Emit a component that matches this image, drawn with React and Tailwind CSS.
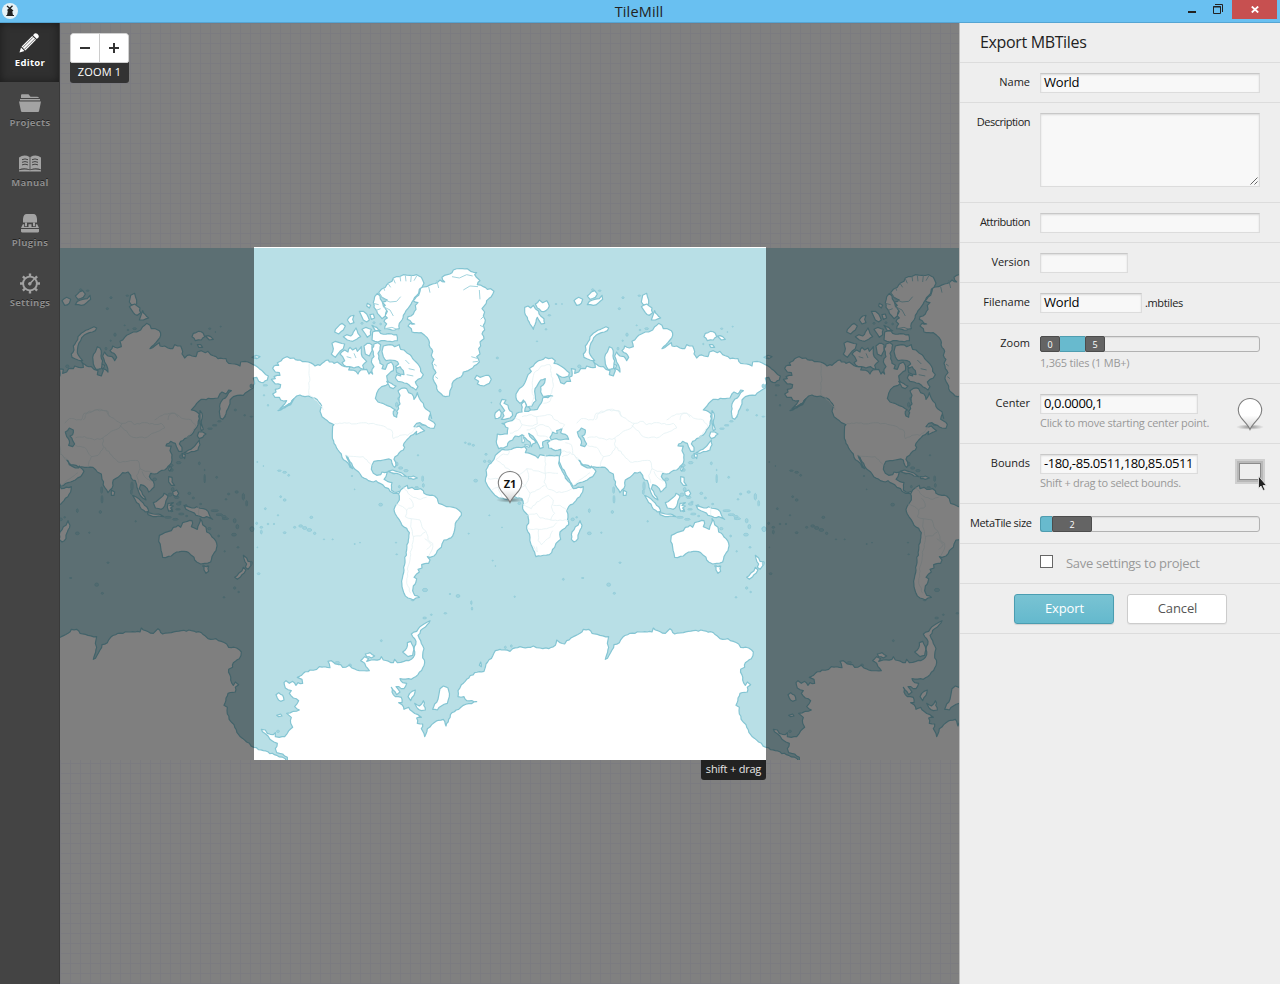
import React from "react";

// Coastlines are traced on a tripled grid; each part is [offsetX, offsetY, points].
const A = [0, 0], B = [750, 0], C = [0, 510], D = [750, 510], E = [0, 1080], F = [750, 1080];

// Repeatable noise in -1..1 that roughens the long straight runs of a coast.
function noise(a, b) {
  const v = Math.sin(a * 12.9898 + b * 78.233) * 43758.5453;
  return (v - Math.floor(v)) * 2 - 1;
}

function outline(...parts) {
  const pts = [];
  for (const [[ox, oy], s] of parts) {
    for (const p of s.trim().split(/\s+/)) {
      const [x, y] = p.split(",").map(Number);
      pts.push([x + ox, y + oy]);
    }
  }
  const out = [];
  pts.forEach(([x, y], i) => {
    out.push(`${x},${y}`);
    const next = pts[i + 1];
    if (!next) return;
    const dx = next[0] - x, dy = next[1] - y;
    const len = Math.hypot(dx, dy);
    const n = Math.floor(len / 7);
    for (let k = 1; k < n; k++) {
      const t = k / n;
      const off = noise(x + k * 3, y) * 2.2;
      out.push(`${(x + dx * t - (dy / len) * off).toFixed(1)},${(y + dy * t + (dx / len) * off).toFixed(1)}`);
    }
  });
  return "M" + out.join("L");
}

const LAND = [
  // North America
  outline(
    [A, "64,418 76,416 72,410 90,406 88,398 76,396 68,385 72,378 86,376 82,368 94,362 98,356 112,350 120,355 132,354 136,359 150,360 158,365 175,366 195,378 204,374 210,376 222,366 235,360 238,366 248,366 252,370 262,366 270,372 285,380 300,380 296,390 318,394 324,402 332,390 350,388 357,402 362,396 368,402 366,388 372,380 364,366 366,356 372,350 370,336 366,326 372,312 384,308 392,314 390,330 384,340 386,356 390,370 400,376 396,386 406,388 412,372 424,366 430,376 430,392 418,400 410,408 412,420 418,430 408,436 395,440 386,448 380,460 376,475 384,486 398,490 412,497 430,506 436,510"],
    [C, "430,4 432,18 440,22 443,8"],
    [A, "440,514 446,506 444,498 450,492 447,476 450,466 444,452 455,445 470,446 476,458 486,462 492,478 498,470 502,458 508,475 520,490 522,500 540,515 545,535"],
    [C, "541,12 536,28 546,34 556,44 552,55 540,54 526,46 510,38 500,40 492,50 508,48 518,58 524,62 510,68 498,74 500,64 490,74 478,82 470,90 462,100 460,106 464,112 460,120 448,128 435,140 432,148 438,166 434,172 426,160 424,150 410,148 400,150 384,152 372,154 366,165 364,178 370,190 380,196 392,194 396,186 412,186 408,200 402,208 412,214 426,218 424,240 432,246 448,244 450,252 440,250 430,250 420,244 416,236 405,232 390,220 378,212 370,216 355,212 335,200 326,186 315,178 305,160 294,142 288,136 296,154 308,176 300,172 288,154 276,142 274,132 264,120 252,100 247,78 248,48 252,44 238,38 226,28 216,20 210,4"],
    [A, "215,498 206,486 194,474 176,468 165,470 150,465 140,468 132,476 124,488 104,500 90,506 104,492 110,482 92,480 88,472 75,472 68,462 78,456 76,448 90,444 92,434 76,432"]
  ),
  // Alaska Peninsula and the Aleutians
  outline([A, "132,476 122,490 104,502 84,512 104,504 122,494"]),
  // South America
  outline([C, "446,252 452,240 462,232 472,226 474,236 486,232 494,238 512,236 520,242 522,250 530,254 540,256 554,258 562,266 566,280 578,284 590,290 610,292 626,300 634,308 634,316 625,328 616,340 614,360 608,378 596,386 582,390 576,402 574,412 562,422 552,438 540,442 532,440 540,450 536,460 515,464 516,474 504,478 508,486 500,492 492,502 500,506 498,516 490,528 488,542 494,556 508,562 498,564 490,570 474,564 462,550 456,530 457,505 462,480 465,450 470,420 475,390 478,368 470,355 456,346 447,328 436,312 432,298 440,282 448,270 448,258"]),
  // Greenland
  outline([A, "510,154 512,142 530,140 548,132 562,128 570,120 584,126 576,112 592,104 606,98 610,90 630,86 652,86 662,94 680,98 674,104 690,122 682,134 700,140 712,148 722,146 732,154 724,170 710,182 704,196 696,206 704,216 700,228 706,240 700,256 704,270 696,282 702,296 690,306 692,318 686,326 690,342 680,350 688,366 680,374 668,384 640,396 634,410 620,416 610,424 606,440 600,452 598,468 586,470 574,462 564,454 560,438 552,424 550,408 558,398 550,386 546,370 552,358 544,346 548,334 540,322 536,300 524,286 514,278 500,278 486,276 484,266 474,258 480,250 494,252 472,238 474,230 490,222 498,208 496,196 504,188 490,182 506,166"]),
  // Ellesmere
  outline([A, "386,158 394,148 406,142 414,130 426,124 430,114 448,110 460,104 480,106 500,104 514,112 522,130 516,142 508,148 506,160 494,172 486,186 478,200 468,212 460,226 456,240 448,250 448,266 434,270 420,268 404,266 410,252 402,244 412,234 404,226 412,214 396,204 406,196 396,186 412,180 396,172"]),
  outline([A, "382,160 374,170 370,188 372,202 380,212 388,226 396,236 406,228 410,212 400,198 396,184 390,168"]),
  outline([A, "368,276 386,272 392,280 440,284 442,302 420,304 404,302 384,306 366,300"]),
  outline([A, "400,318 420,314 434,320 448,314 452,328 462,330 470,338 480,344 488,356 498,366 508,378 512,394 520,404 514,414 504,418 496,426 504,440 498,450 482,440 470,430 456,426 444,424 436,414 440,404 452,408 448,390 436,380 446,372 436,362 420,360 408,362 400,350 396,334"]),
  // Western archipelago
  outline([A, "246,310 256,304 268,308 284,312 280,326 270,334 262,344 256,352 244,342 250,326"]),
  outline([A, "270,342 284,330 294,336 300,322 308,330 318,324 322,334 334,320 334,342 342,356 350,364 338,376 342,388 326,380 312,384 298,380 282,376 276,368 284,362 278,350"]),
  outline([A, "254,276 262,262 276,250 286,258 280,270 266,282"]),
  outline([A, "280,290 290,284 302,288 310,276 318,264 324,280 332,290 320,298 308,304 292,300"]),
  outline([A, "292,240 302,228 312,226 308,238 312,248 300,252"]),
  outline([A, "328,214 340,214 350,222 358,240 350,246 340,240"]),
  outline([A, "342,318 352,310 366,314 366,332 358,348 346,342"]),
  outline([A, "336,268 348,262 364,268 362,284 352,292 346,282"]),
  outline([A, "366,256 380,262 392,272 376,272"]),
  outline([A, "360,224 370,222 374,234 364,238"]),
  outline([A, "352,190 362,196 358,204 350,198"]),
  outline([A, "410,424 424,430 438,438 430,446 420,442"]),
  // Iceland
  outline([A, "674,416 680,406 690,412 702,408 716,406 724,418 718,430 702,438 690,436 682,432 686,424"]),
  // Great Britain and Ireland
  outline([D, "6,-10 0,-18 6,-32 18,-30 12,-20 24,-14 26,-4 36,6 38,16 30,24 14,28 4,28 12,18 8,8 14,2"]),
  outline([D, "-14,8 -2,-2 4,8 2,20 -14,26 -16,16"]),
  // Eurasia
  outline(
    [B, "50,480 48,462 54,452 70,436 78,420 84,404 94,394 88,386 100,378 110,366 124,360 136,352 146,356 156,354 166,362 162,370 176,374 186,380 200,392 208,398 206,408 194,412 178,408 170,402 178,416 182,428 192,432 200,424 212,424 208,412 216,408 214,386 226,388 224,400 236,396 242,386 256,386 260,378 272,382 286,382 280,364 296,378 310,380 318,388 330,392 328,404 340,408 346,392 340,372 350,376 346,386 360,396 356,376 350,366 344,348 350,336 360,348 372,350 380,362 386,352 378,340 366,332 374,318 388,324 400,320 396,304 410,292 424,282 436,276 446,276 458,270 464,260 476,250 486,256 490,266 502,266 514,272 518,286 510,300 498,314 486,326 500,318 514,308 516,318 530,318 540,324 554,326 560,314 578,318 582,328 582,342 590,354 598,346 612,348 624,350 628,336 640,332 652,338 660,334 668,344 684,350 690,356 714,356 722,370 740,372 756,378 758,366 780,366 796,374 814,386 826,396 841,408 838,420 826,428 812,424 806,412 796,414 800,430 796,444 780,454 766,466 748,466 736,470 726,480 726,492 720,506 714,522 704,538 697,534 694,514 696,492 704,478 718,466 730,452 722,450 714,462 702,456 690,474 668,476 640,478 626,490 610,510 624,514 634,522"],
    [D, "634,26 630,44 616,68 602,78 590,86 578,94 574,102 582,112 582,124 572,124 566,112 562,100 548,94 536,102 534,108 550,108 546,122 552,134 552,150 545,165 530,180 514,185 500,192 488,190 484,200 496,214 498,232 482,246 478,236 466,226 458,224 454,236 464,254 474,270 464,264 452,246 446,224 442,212 434,210 428,196 420,186 404,188 390,202 376,210 372,235 360,248 350,232 342,208 340,192 328,186 315,172 290,172 272,172 264,166 248,164 240,152 236,150 244,164 262,174 272,174 274,168 288,184 278,200 262,210 240,218 218,228 210,214 196,188 180,160 174,148 180,136 182,118 166,122 146,114 142,98 150,92 136,92 128,96 130,112 120,116 112,98 104,86 92,74 86,70 96,86 108,98 98,102 94,110 90,96 76,84 66,74 56,80 46,78 38,90 28,94 22,108 10,114 -4,116 -10,102 -8,72 22,72 24,54 6,40 20,36 36,32 46,20"],
    [B, "50,520 66,516 64,494 74,484 80,496 74,514 86,514 96,506 90,502 80,500 76,488 70,480 60,490"]
  ),
  // Africa
  outline([D, "6,118 24,120 50,112 74,110 80,118 76,128 98,134 114,144 120,134 140,138 164,138 178,138 178,150 176,160 184,178 196,204 214,226 220,236 250,230 248,246 228,272 206,290 200,302 204,322 206,344 196,354 180,366 182,388 168,400 164,412 148,434 122,438 108,440 100,420 92,400 90,382 80,356 86,330 84,316 68,296 70,282 66,266 52,264 40,258 22,268 8,264 -4,264 -20,250 -36,230 -44,214 -40,196 -42,180 -34,164 -18,148 -14,136 0,124"]),
  outline([D, "240,332 246,346 238,366 234,386 222,396 214,388 216,366 226,350 234,346"]),
  // Novaya Zemlya
  outline([B, "318,260 326,264 322,272 304,278 288,286 278,302 270,318 268,338 276,352 284,362 270,360 252,352 250,342 258,330 256,318 264,306 270,290 286,276 302,268"]),
  // Yamal
  outline([B, "328,320 336,324 340,340 342,370 340,386 324,388 316,372 314,352 322,336"]),
  // Svalbard
  outline([B, "74,202 84,198 92,204 100,196 106,206 116,214 122,228 132,236 134,250 124,252 112,232 108,246 100,268 90,252 82,232 74,218"]),
  outline([B, "106,192 118,180 128,188 140,182 148,198 138,212 124,214 112,204"]),
  // Franz Josef Land
  outline([B, "222,182 236,172 248,178 244,190 230,196"]),
  outline([B, "262,168 274,156 284,152 292,162 286,172 270,178"]),
  outline([B, "268,184 284,178 298,176 306,166 308,178 294,190 280,196 262,194"]),
  // Severnaya Zemlya
  outline([B, "428,166 440,160 446,180 446,192 436,196 424,186"]),
  outline([B, "424,200 440,192 456,204 458,218 448,226 436,218"]),
  outline([B, "464,212 472,224 482,234 466,240 454,240"]),
  // New Siberian Islands
  outline([B, "616,280 632,274 646,280 650,290 640,300 622,302 612,290"]),
  outline([B, "652,288 668,290 676,298 664,300"]),
  outline([B, "628,314 638,314 644,322 632,322"]),
  outline([B, "792,352 804,346 816,350 806,356"]),
  // Sakhalin, Japan
  outline([D, "636,2 642,10 640,40 646,58 640,62 636,40"]),
  outline([D, "632,66 644,66 654,72 644,82 634,86 628,78"]),
  outline([D, "634,90 636,104 630,120 620,124 600,130 588,128 602,120 616,112 626,100"]),
  outline([D, "582,130 592,134 590,146 584,140"]),
  // Sri Lanka, Taiwan
  outline([D, "370,240 380,246 378,256 370,256"]),
  outline([D, "544,170 550,172 546,184 542,180"]),
  // Sumatra, Java, Borneo, Sulawesi, New Guinea, Philippines
  outline([D, "434,256 446,262 460,274 476,290 482,304 472,306 456,290 442,270"]),
  outline([D, "478,308 496,312 518,314 528,320 504,320 480,314"]),
  outline([D, "496,278 510,270 520,262 528,250 540,260 534,272 530,288 520,298 502,294"]),
  outline([D, "540,280 556,278 546,286 556,288 548,294 554,304 546,302 542,304 538,292"]),
  outline([D, "588,286 600,290 612,294 626,290 646,296 660,304 664,314 674,328 656,320 642,322 624,316 612,306 594,298"]),
  outline([D, "542,200 552,202 552,216 560,226 550,226 542,216"]),
  outline([D, "554,246 566,240 572,250 566,260 556,256"]),
  // Australia, Tasmania
  outline([D, "514,376 530,368 550,362 556,352 570,346 578,352 584,338 598,334 612,332 614,340 610,350 628,358 634,340 636,326 644,344 654,352 656,366 668,374 678,386 686,400 684,422 672,440 668,456 650,460 638,462 626,456 618,442 610,436 602,428 588,424 566,426 550,438 524,442 522,430 518,412 512,394"]),
  outline([D, "648,468 662,468 662,484 654,490 648,480"]),
  // New Zealand
  outline([D, "766,436 776,444 780,454 792,456 788,468 780,478 772,472 776,462 768,446"]),
  outline([D, "766,472 774,480 768,490 758,500 748,508 740,502 752,490 762,482"]),
  // Cuba, Hispaniola
  outline([C, "414,184 428,180 446,186 462,194 470,200 456,198 440,190 424,188"]),
  outline([C, "474,200 490,198 502,204 490,208 476,206"]),
  // Antarctica
  outline(
    [E, "112,500 112,472 98,462 80,458 76,446 82,430 72,426 60,418 54,408 44,400 34,388 46,390 52,400 70,404 76,398 76,410 88,412 104,410 112,400 128,382 122,370 124,352 110,340 130,334 148,330 134,320 142,310 146,302 130,294 118,280 124,272 106,264 102,248 108,242 118,250 128,244 138,256 144,248 158,250 156,238 142,232 160,220 180,210 200,208 208,200 240,203 238,192 234,184 244,182 256,192 272,194 278,202 298,196 306,204 320,210 358,212 348,200 344,190 332,182 344,170 356,176 350,184 364,180 390,178 394,170 400,180 430,188 434,178 442,188 462,184 484,178 494,164 492,148 498,124 484,102 500,94 510,80 522,72 540,62 532,74 518,86 504,106 512,122 522,146 518,166 524,188 518,204 504,224 484,238 450,236 458,248 470,250 462,266 438,260 450,276 440,284 424,262 426,276 436,290 454,292 456,308 446,308 456,314 462,328 476,322 486,334 504,344 514,352 500,354 502,370 518,372 514,386 524,410 532,386 552,368 580,358 588,378 596,358 606,338 626,328 640,316 680,305 650,302 642,290 624,290 624,272 634,254 650,238 674,218 702,214 708,192 728,168 736,152 750,148"],
    [F, "5,150 30,154 38,146 60,140 84,142 100,138 120,144 146,146 166,136 170,120 180,128 194,132 200,122 220,110 240,100 250,88 266,88 276,100 300,106 326,110 322,130 326,142 316,178 326,168 336,150 342,134 358,128 368,112 390,100 420,96 456,96 460,84 466,90 496,100 510,86 524,102 550,98 580,92 610,92 640,98 652,108 660,116 684,116 700,124 716,132 722,142 746,144 760,156 754,176 736,188 734,202 722,208 728,240 736,256 742,246 752,254 742,262 742,276 720,280 714,294 708,316 718,322 718,342 728,364 738,374 752,404 776,426 798,442 826,452 866,466 892,476 900,500"]
  ),
  // Antarctic coastal islands
  outline([E, "78,284 86,278 98,286 102,300 92,304 82,294"]),
  outline([E, "570,266 580,258 594,264 598,290 592,310 574,318 562,330 548,328 554,312 564,298"]),
  outline([E, "474,290 486,274 496,270 492,286 482,302"]),
  outline([E, "494,310 508,318 520,302 526,330 514,332 500,322"]),
  outline([E, "80,346 92,342 96,348 86,350"]),
  outline([E, "458,156 470,144 472,128 482,124 490,140 488,166 474,170"]),
  outline([E, "346,162 360,158 374,168 364,174 350,170"]),
  outline([E, "692,186 694,200 688,196"]),
];

const WATER = [
  outline([B, "104,454 110,440 122,420 136,416 134,428 122,440 122,456 128,468 158,468 128,474 120,494 112,508 92,510 86,500 96,498 108,482 106,468"]),
  outline([D, "150,82 158,66 172,70 170,62 186,56 182,68 202,78 206,88 182,90 168,86 154,90"]),
  outline([D, "232,66 244,54 256,60 254,74 246,78 254,92 260,102 254,110 242,106 244,92 236,80"]),
  outline([A, "438,386 450,380 460,392 462,404 450,402 440,398"]),
];

const ISLES_IN_SEA = [outline([D, "66,76 72,76 72,98 66,98"]), outline([D, "74,104 90,106 88,112 76,108"])];

const FJORDS =
  "M386,158L400,178L420,186L440,184L452,170M404,266L426,262L446,270M640,150L660,138L684,140M606,110L628,114L650,104L668,108M688,150L690,178M400,200L420,210L430,228M560,120L566,144M536,140L540,158M400,140L404,152M414,130L422,142M430,116L436,130M450,108L452,124M466,106L468,124M484,106L482,126M500,108L492,122M370,190L386,194M376,212L392,206M664,350L684,356M668,366L684,364M700,230L692,238M702,262L690,256M552,372L560,378M556,410L564,416M290,350L304,354M312,340L318,354M466,360L478,372M476,386L494,390M470,404L490,408";

const BORDERS = [
  outline([A, "178,370 178,466 190,472 206,490 220,510"]),
  outline([C, "254,40 370,40 400,48 426,62 430,86 450,76 474,76 490,62 500,44"]),
  outline([C, "286,136 320,140 340,140 354,156 366,166"]),
  outline([C, "462,232 474,250 490,262 512,268 530,262"]),
  outline([C, "438,282 458,290 470,300 490,290 484,270 478,264"]),
  outline([C, "470,300 466,320 484,326 510,330 516,350 530,370 534,388 548,400 546,420 536,438"]),
  outline([C, "484,326 482,350 490,380 484,420 474,470 470,520 482,550"]),
  outline([C, "490,380 512,378 526,366"]),
  outline([C, "524,386 544,404 530,418"]),
  outline([D, "-12,148 10,132 24,134 28,120"]),
  outline([D, "-12,148 40,190 54,196 80,176 136,190 174,190"]),
  outline([D, "136,134 136,190 132,216 146,238 170,248 200,244 216,236"]),
  outline([D, "80,176 86,202 76,226 60,238 54,262"]),
  outline([D, "76,226 90,250 110,240 134,226"]),
  outline([D, "90,250 84,276 70,284 94,296 110,276 146,256 160,270 154,290 164,310 152,330 120,324 110,310 82,316"]),
  outline([D, "160,286 180,286 202,302"]),
  outline([D, "152,330 180,330 204,332"]),
  outline([D, "84,356 116,358 140,356 160,350 170,338"]),
  outline([D, "116,358 114,392 124,404 150,382 158,362"]),
  outline([D, "110,410 112,426 96,404"]),
  outline([D, "-36,206 -6,206 10,226 34,222 54,214 74,226"]),
  outline([D, "-24,240 -6,232 6,264"]),
  outline([D, "230,40 244,26 280,30 288,10 320,0 356,2 362,16 384,32 404,40 396,52 370,64 344,84 320,90 290,80 262,84"]),
  outline([D, "404,40 430,34 440,44 470,38 500,44 520,40 530,54 500,68 470,84 430,80 410,60 396,46"]),
  outline([D, "500,30 530,12 560,10 580,24 610,30 624,50 596,84"]),
  outline([D, "344,84 346,110 372,136 390,156 420,154 450,152 456,176 472,184 496,190"]),
  outline([D, "262,106 290,112 310,140 300,172"]),
  outline([D, "310,140 330,136 346,112"]),
  outline([D, "196,98 214,104 218,130 238,150"]),
  outline([D, "184,124 210,126 236,150"]),
  outline([D, "186,140 210,130"]),
  outline([D, "220,226 246,206 270,188"]),
  outline([D, "456,176 446,196 452,220"]),
  outline([D, "462,184 476,206 490,214"]),
  outline([D, "44,24 60,30 66,44 52,62 30,70"]),
  outline([D, "66,20 94,14 110,20 112,42 90,48 66,44"]),
  outline([D, "110,20 150,14 166,30 194,44 184,56"]),
  outline([D, "80,60 104,54 120,44 146,50 156,66"]),
  outline([D, "104,54 112,76 144,82"]),
  outline([B, "90,500 102,470 96,450 102,400 124,378 150,374 154,400 160,440 150,466"]),
  outline([B, "130,490 150,484 154,470"]),
  outline([B, "286,540 296,520 330,508 360,514 364,530"]),
  outline([B, "540,540 544,524 560,520 570,532"]),
  outline([D, "630,290 632,316"]),
];

// Small islands: x, y, rx, ry
const ISLETS = [
  [14, 352, 8, 3], [42, 466, 3, 3], [54, 496, 3, 4], [4, 438, 6, 8], [46, 436, 10, 3],
  [750, 452, 5, 6], [724, 488, 2, 2], [742, 354, 5, 4], [336, 250, 5, 4], [372, 248, 5, 4], [392, 252, 4, 4],
  [918, 192, 5, 2], [936, 192, 2, 2], [898, 226, 6, 3], [888, 268, 4, 3], [861, 304, 3, 2], [1119, 173, 5, 4], [1108, 206, 5, 4],
  [1028, 149, 5, 4], [1049, 152, 6, 3], [1168, 167, 6, 3], [1131, 284, 5, 7], [1118, 302, 3, 3], [1160, 256, 3, 2], [1190, 266, 8, 4],
  [1104, 326, 4, 6], [1415, 266, 5, 3], [1448, 260, 3, 2], [1432, 276, 2, 2], [1360, 312, 3, 3], [988, 379, 7, 6], [1170, 270, 4, 3],
  [1492, 510, 5, 4], [1520, 526, 4, 3], [1540, 530, 6, 2], [1210, 740, 0, 0],
  [22, 666, 3, 2], [40, 678, 2, 2], [88, 692, 8, 3], [104, 697, 8, 4], [116, 706, 4, 4], [306, 708, 4, 2], [314, 748, 2, 2],
  [392, 794, 8, 6], [92, 770, 4, 4], [104, 780, 6, 5], [46, 806, 4, 4], [84, 826, 3, 3], [20, 850, 4, 5], [34, 862, 6, 4],
  [54, 852, 4, 3], [184, 832, 6, 5], [134, 862, 5, 4], [152, 858, 8, 5], [164, 864, 9, 6], [178, 870, 10, 6], [194, 880, 5, 5],
  [104, 878, 6, 4], [6, 868, 8, 10], [34, 876, 4, 8], [72, 852, 3, 3], [222, 898, 3, 2], [248, 898, 3, 2], [314, 912, 3, 2],
  [330, 908, 2, 2], [26, 1001, 6, 4], [4, 970, 4, 8], [438, 908, 3, 2], [440, 943, 4, 2], [22, 922, 2, 2],
  [646, 608, 4, 3], [658, 612, 7, 4], [670, 616, 5, 4], [708, 643, 5, 4], [704, 664, 5, 5], [718, 664, 6, 5], [677, 722, 8, 6],
  [504, 646, 3, 3], [525, 1050, 11, 7], [600, 1062, 4, 2], [624, 1068, 8, 6], [664, 1088, 3, 8], [666, 1106, 3, 7], [394, 1202, 4, 4],
  [586, 1120, 6, 3], [488, 1081, 6, 2], [656, 881, 3, 2], [718, 826, 3, 2], [728, 962, 3, 2], [736, 978, 2, 2], [756, 862, 2, 2],
  [440, 672, 6, 8], [452, 684, 9, 5], [468, 692, 9, 5], [432, 700, 8, 3], [518, 716, 4, 12], [520, 736, 4, 8], [500, 742, 8, 3], [448, 740, 4, 5],
  [520, 553, 12, 5],
  [1091, 750, 4, 14], [1092, 778, 4, 16], [1087, 816, 5, 6], [1018, 812, 4, 8], [968, 838, 7, 6], [980, 832, 4, 3], [990, 850, 4, 4],
  [1018, 880, 8, 6], [1054, 878, 3, 3], [1193, 844, 3, 3], [1076, 1034, 8, 7], [1093, 1060, 5, 4], [940, 1018, 4, 4],
  [998, 1014, 6, 2], [1110, 968, 5, 3], [794, 1070, 3, 3],
  [1384, 670, 4, 6], [1400, 716, 3, 18], [1354, 760, 6, 5], [1326, 786, 6, 3], [1366, 774, 5, 4], [1400, 690, 2, 3], [1436, 712, 4, 4],
  [1496, 756, 7, 5], [1516, 770, 5, 14], [1526, 790, 4, 12], [1472, 762, 5, 4], [1464, 778, 4, 3], [1388, 792, 5, 3],
  [1430, 812, 16, 4], [1444, 824, 14, 4], [1462, 836, 14, 4], [1458, 830, 9, 5], [1490, 842, 6, 9], [1498, 860, 6, 9], [1488, 884, 10, 6],
  [1414, 866, 7, 5], [1542, 866, 9, 8], [1442, 888, 4, 4], [1460, 934, 3, 3], [1500, 922, 5, 3], [1490, 1044, 5, 5], [1502, 1056, 4, 3], [1458, 1072, 4, 3],
  [1300, 676, 8, 5], [1322, 668, 10, 5], [1330, 650, 8, 8], [1302, 690, 5, 6], [1304, 748, 6, 8], [1296, 764, 8, 7], [1316, 772, 10, 5], [1322, 792, 10, 5],
  [1290, 832, 14, 4], [1312, 838, 12, 4], [1330, 822, 12, 4], [1320, 808, 10, 3], [1300, 810, 5, 8], [1344, 800, 5, 10], [1346, 828, 5, 3],
  [1182, 738, 5, 18], [1180, 756, 4, 10], [1200, 780, 8, 5], [1212, 798, 6, 5], [1250, 718, 8, 6], [1396, 978, 4, 4], [1408, 980, 4, 4],
  [808, 790, 6, 5], [816, 780, 4, 4], [1416, 566, 10, 3], [1430, 556, 10, 3], [1444, 544, 8, 3], [1458, 530, 6, 4],
  [524, 1134, 8, 4], [544, 1124, 4, 3], [766, 1222, 4, 5], [784, 1218, 4, 5], [1474, 1332, 4, 6], [440, 494, 5, 10], [446, 476, 4, 6],
  [560, 366, 5, 10], [84, 1474, 6, 5], [262, 1268, 10, 5], [300, 1276, 6, 6],
];

function World({ shift }) {
  return (
    <g transform={`translate(${shift} 0)`}>
      <g fill="#a3d4de" stroke="#8bc9d6" strokeWidth="2">
        {ISLETS.map(([x, y, rx, ry], i) => (
          <ellipse key={i} cx={x} cy={y} rx={rx * 0.72} ry={ry * 0.72} />
        ))}
      </g>
      <g fill="#fff" stroke="#84c5d3" strokeWidth="3.6" strokeLinejoin="round">
        {LAND.map((d, i) => (
          <path key={i} d={d + "Z"} />
        ))}
      </g>
      <g fill="#b8dfe6" stroke="#84c5d3" strokeWidth="3.6" strokeLinejoin="round">
        {WATER.map((d, i) => (
          <path key={i} d={d + "Z"} />
        ))}
      </g>
      <g fill="#fff" stroke="#84c5d3" strokeWidth="3" strokeLinejoin="round">
        {ISLES_IN_SEA.map((d, i) => (
          <path key={i} d={d + "Z"} />
        ))}
      </g>
      <path d={FJORDS} fill="none" stroke="#a3d4de" strokeWidth="3" />
      <g fill="none" stroke="#e3f1f4" strokeWidth="2.4" strokeLinejoin="round">
        {BORDERS.map((d, i) => (
          <path key={i} d={d} />
        ))}
      </g>
    </g>
  );
}

function MapCanvas() {
  return (
    <svg className="block h-[513px] w-[899px]" viewBox="60 247 899 513">
      <g transform="translate(250 240) scale(0.333333)">
        <rect x="-600" y="24" width="3000" height="1536" fill="#b8dfe6" />
        <World shift={-1536} />
        <World shift={0} />
        <World shift={1536} />
      </g>
      <rect x="60" y="248" width="194" height="512" fill="#000" fillOpacity="0.5" />
      <rect x="766" y="248" width="193" height="512" fill="#000" fillOpacity="0.5" />
      <rect x="254" y="247" width="512" height="1" fill="#fff" />
    </svg>
  );
}

function Pin({ className, label }) {
  return (
    <svg className={className} viewBox="0 0 30 36">
      <defs>
        <linearGradient id="pinFill" x1="0" y1="0" x2="0" y2="1">
          <stop offset="0.55" stopColor="#fff" />
          <stop offset="1" stopColor="#cfcfcf" />
        </linearGradient>
        <radialGradient id="pinShade">
          <stop offset="0" stopColor="#000" stopOpacity="0.4" />
          <stop offset="1" stopColor="#000" stopOpacity="0" />
        </radialGradient>
      </defs>
      <ellipse cx="15" cy="31" rx="14" ry="2.8" fill="url(#pinShade)" />
      <path d="M15 33.500C13 28.500 9 25.500 6 21.500C4.200 19 3.300 16.500 3.300 14.200A11.700 11.700 0 0 1 26.700 14.200C26.700 16.500 25.800 19 24 21.500C21 25.500 17 28.500 15 33.500Z" fill="url(#pinFill)" stroke="#7d7d7d" strokeWidth="1.100" />
      {label && (
        <text x="15" y="18.500" textAnchor="middle" fontFamily="Open Sans, sans-serif" fontWeight="700" fontSize="11" fill="#111">
          {label}
        </text>
      )}
    </svg>
  );
}

const ICONS = {
  Editor: (
    <g fill="#fff">
      <path d="M0.500 19.500L2 14.500L5.500 18Z" />
      <path d="M2.600 13.600L13.200 3L17 6.800L6.400 17.400Z" />
      <path d="M14 2.200L15.600 0.600Q16.800 -0.400 18.200 0.800L19.300 1.900Q20.400 3.200 19.400 4.400L17.800 6Z" />
      <path d="M3.800 14.500L14 4.300M5.500 16.200L15.700 6" stroke="#333" strokeWidth="0.700" />
    </g>
  ),
  Projects: (
    <g fill="#a3a3a3">
      <path d="M2 5V2.500Q2 1.200 3 1.200H9.500L11.500 3.800H18Q19.500 3.800 20 5Z" />
      <path d="M1 6H21V7.400H1Z" />
      <path d="M0 8.600H22L20 18.200Q19.800 19 19 19H3Q2.200 19 2 18.200Z" />
    </g>
  ),
  Manual: (
    <g fill="#a3a3a3">
      <path d="M0 4.500Q5 1 10.600 4V16.500Q5 14 0 16.500ZM22 4.500Q17 1 11.400 4V16.500Q17 14 22 16.500Z" />
      <path d="M0 17.300Q6 15.500 11 17.300Q16 15.500 22 17.300V18.500H0Z" />
      <path d="M3 6.700Q6 5.200 9 6.700M3 9.300Q6 7.800 9 9.300M3 11.900Q6 10.400 9 11.900M13 6.700Q16 5.200 19 6.700M13 9.300Q16 7.800 19 9.300M13 11.900Q16 10.400 19 11.900" stroke="#444" strokeWidth="1" fill="none" />
    </g>
  ),
  Plugins: (
    <g fill="#a3a3a3">
      <path d="M4 9.500V6Q4.500 1 7.500 1H14.500Q17.500 1 18 6V9.500Z" />
      <path d="M6 9.500H8V13.200H6ZM14 9.500H16V13.200H14Z" />
      <path d="M3.800 11.200H5.200V14H9.500V11.200H12.500V14H16.800V11.200H18.200L20 15H2Z" />
      <path d="M2 16H20V18.600Q20 19.400 19 19.400H3Q2 19.400 2 18.600Z" />
    </g>
  ),
  Settings: (
    <g stroke="#a3a3a3" fill="none">
      <circle cx="11" cy="10.500" r="6.900" strokeWidth="1.900" />
      <path d="M11 0.500V3.500M11 17.500V20.500M1 10.500H4M18 10.500H21M3.900 3.400L6 5.500M16 15.500L18.100 17.600M3.900 17.600L6 15.500M16 5.500L18.100 3.400" strokeWidth="2.400" />
      <path d="M11 10.500L15.500 5.700" strokeWidth="1.500" />
      <circle cx="10.800" cy="10.800" r="1.300" fill="#a3a3a3" strokeWidth="1" />
    </g>
  ),
};

function NavItem({ name, active }) {
  return (
    <a
      className={
        active
          ? "flex h-[59px] flex-col items-center bg-[#303030] pt-[10px] pl-px text-white shadow-[inset_0_0_8px_rgba(0,0,0,0.45)]"
          : "flex h-[60px] flex-col items-center pt-[11px] pl-px text-[#8c8c8c]"
      }
    >
      <svg className="h-[21px] w-[22px] overflow-visible" viewBox="0 0 22 21">
        {ICONS[name]}
      </svg>
      <span className="mt-[2px] text-[9.5px] leading-[14px] font-bold tracking-[0.3px] [text-shadow:0_-1px_0_#222]">{name}</span>
    </a>
  );
}

function Row({ label, className, tight, children }) {
  return (
    <div className={`flex border-b border-[#dcdcdc] pt-[10px] ${className}`}>
      <label
        className={`w-[70px] shrink-0 text-right text-[11px] leading-[18px] whitespace-nowrap text-[#222] ${tight ? "tracking-[-0.5px]" : ""}`}
      >
        {label}
      </label>
      <div className="ml-[10px] flex grow">{children}</div>
    </div>
  );
}

function Field({ className, children }) {
  return (
    <div
      className={`border border-[#dcdcdc] border-t-[#c8c8c8] bg-[#f8f8f8] pl-[3px] text-[13px] leading-[16px] whitespace-nowrap text-black shadow-[inset_0_1px_2px_rgba(0,0,0,0.12)] ${className}`}
    >
      {children}
    </div>
  );
}

const handle =
  "flex items-center justify-center rounded-[2px] border border-[#4c4c4c] bg-[#646464] text-[9px] leading-none text-white";

export default function App() {
  return (
    <div className="flex h-[984px] w-[1280px] flex-col overflow-hidden bg-[#808080] font-['Open_Sans',sans-serif]">
      <header className="flex h-[23px] shrink-0 border-b border-[#55a5d3] bg-[#69c0f1]">
        <div className="w-[200px] pt-[3px] pl-[2px]">
          <svg className="h-4 w-4" viewBox="0 0 16 16">
            <circle cx="8" cy="8" r="8" fill="#e4f1f6" />
            <path d="M5 12.500L6 7Q8 4.500 10 7L11 12.500Z" fill="#222" />
            <path d="M5 3L11 8M10.500 2.800L5.500 7.500" stroke="#222" strokeWidth="1.300" />
            <path d="M4.300 12.500H12" stroke="#222" />
          </svg>
        </div>
        <h1 className="grow text-center text-[14.5px] leading-[24px] tracking-[0.15px] text-[#222]">TileMill</h1>
        <div className="flex w-[202px] justify-end">
          <svg className="h-[19px] w-[48px]" viewBox="0 0 48 19" fill="none" stroke="#222">
            <path d="M4 12H12" strokeWidth="2" />
            <path d="M29.500 6.500H36.500V13.500H29.500Z" />
            <path d="M29 7H37" strokeWidth="1" />
            <path d="M31 4.500H38.500V12" />
          </svg>
          <div className="flex h-[19px] w-[45px] items-center justify-center bg-[#c75050]">
            <svg className="h-[7px] w-[8px]" viewBox="0 0 8 7">
              <path d="M0.800 0.500L7.200 6.500M7.200 0.500L0.800 6.500" stroke="#fff" strokeWidth="1.800" />
            </svg>
          </div>
          <div className="w-[3px]" />
        </div>
      </header>

      <div className="flex min-h-0 grow">
        <nav className="w-[60px] shrink-0 border-r border-[#3a3a3a] bg-[#444]">
          <NavItem name="Editor" active />
          <NavItem name="Projects" />
          <NavItem name="Manual" />
          <NavItem name="Plugins" />
          <NavItem name="Settings" />
        </nav>

        <main className="relative w-[899px] shrink-0 bg-[#808080] bg-[linear-gradient(to_right,#7b7b80_1px,transparent_1px),linear-gradient(to_bottom,#7b7b80_1px,transparent_1px)] bg-[size:10px_10px] pt-[224px]">
          <MapCanvas />
          <div className="absolute top-[737px] left-[641px] h-[20px] w-[65px] rounded-b-[3px] bg-[#222] text-center text-[11px] leading-[18px] tracking-[-0.2px] text-[#e6e6e6]">
            shift + drag
          </div>
          <Pin className="absolute top-[446px] left-[435px] h-[36px] w-[30px]" label="Z1" />
          <div className="absolute top-[10px] left-[10px] h-[50px] w-[59px] rounded-[3px] bg-[#333]">
            <div className="flex h-[30px] rounded-t-[3px] rounded-b-[2px] border border-[#d0d0d0] bg-white">
              <div className="flex w-[29px] items-center justify-center border-r border-[#ccc]">
                <span className="h-[2px] w-[10px] bg-[#333]" />
              </div>
              <div className="relative flex grow items-center justify-center">
                <span className="h-[2px] w-[10px] bg-[#333]" />
                <span className="absolute h-[10px] w-[2px] bg-[#333]" />
              </div>
            </div>
            <div className="text-center text-[11px] leading-[18px] tracking-[0.15px] text-white">ZOOM 1</div>
          </div>
        </main>

        <aside className="w-[321px] shrink-0 border-l border-[#bdbdbd] bg-[#eee]">
          <h2 className="h-[40px] border-b border-[#dcdcdc] pl-[20px] text-[16px] leading-[38px] tracking-[-0.35px] text-[#222]">Export MBTiles</h2>
          <Row label="Name" className="h-[40px]">
            <Field className="h-[20px] w-[220px] tracking-[-0.2px]">World</Field>
          </Row>
          <Row label="Description" className="h-[100px]" tight>
            <Field className="relative h-[74px] w-[220px]">
              <svg className="absolute right-px bottom-px h-[8px] w-[8px]" viewBox="0 0 8 8" stroke="#555" strokeWidth="0.900">
                <path d="M0.500 7.500L7.500 0.500M4.500 7.500L7.500 4.500" />
              </svg>
            </Field>
          </Row>
          <Row label="Attribution" className="h-[40px]" tight>
            <Field className="h-[20px] w-[220px]" />
          </Row>
          <Row label="Version" className="h-[40px]">
            <Field className="h-[20px] w-[88px]" />
          </Row>
          <Row label="Filename" className="h-[41px]">
            <Field className="h-[20px] w-[102px] tracking-[-0.2px]">World</Field>
            <span className="pl-[3px] text-[11px] leading-[20px] tracking-[-0.35px] text-[#222]">.mbtiles</span>
          </Row>
          <Row label="Zoom" className="h-[60px]">
            <div className="pt-[2px]">
              <div className="flex h-[16px] w-[220px] rounded-[3px] border border-[#b2b2b2] bg-[#eee] shadow-[inset_0_1px_1px_rgba(0,0,0,0.08)]">
                <div className={`-my-px -ml-px w-[20px] ${handle}`}>0</div>
                <div className="-my-px w-[25px] border-y border-[#4f9db0] bg-[#68bace]" />
                <div className={`-my-px w-[20px] ${handle}`}>5</div>
              </div>
              <p className="pt-[3px] text-[11px] leading-[16px] tracking-[-0.22px] text-[#999]">1,365 tiles (1 MB+)</p>
            </div>
          </Row>
          <Row label="Center" className="h-[60px]">
            <div className="w-[194px]">
              <Field className="h-[20px] w-[158px] tracking-[-0.35px]">0,0.0000,1</Field>
              <p className="pt-px text-[11px] leading-[16px] tracking-[-0.26px] whitespace-nowrap text-[#999]">Click to move starting center point.</p>
            </div>
            <Pin className="mt-[2px] ml-px h-[36px] w-[30px]" />
          </Row>
          <Row label="Bounds" className="h-[60px]">
            <div className="w-[194px]">
              <Field className="h-[20px] w-[158px] tracking-[-0.4px]">-180,-85.0511,180,85.0511</Field>
              <p className="pt-px text-[11px] leading-[16px] tracking-[-0.27px] whitespace-nowrap text-[#999]">Shift + drag to select bounds.</p>
            </div>
            <svg className="mt-[5px] ml-px h-[32px] w-[32px]" viewBox="0 0 32 32">
              <rect x="0" y="0" width="30" height="25" fill="#cfcfcf" />
              <rect x="2" y="2" width="26" height="21" fill="#b8b8b8" />
              <rect x="4.500" y="4.500" width="21" height="16" fill="#eee" stroke="#8a8a8a" />
              <path d="M23.500 17V29.500L26 27L28.200 31.500L30 30.700L28 26.500H31.500Z" fill="#222" stroke="#eee" strokeWidth="0.800" />
            </svg>
          </Row>
          <div className="flex h-[40px] border-b border-[#dcdcdc] pt-[10px]">
            <label className="w-[80px] shrink-0 pl-[10px] text-[11px] leading-[18px] tracking-[-0.35px] whitespace-nowrap text-[#222]">MetaTile size</label>
            <div className="mt-[2px] flex h-[16px] w-[220px] rounded-[3px] border border-[#b2b2b2] bg-[#eee] shadow-[inset_0_1px_1px_rgba(0,0,0,0.08)]">
              <div className="-my-px -ml-px w-[12px] rounded-l-[3px] border border-r-0 border-[#4f9db0] bg-[#68bace]" />
              <div className={`-my-px w-[40px] ${handle}`}>2</div>
            </div>
          </div>
          <div className="flex h-[40px] border-b border-[#dcdcdc] pt-[10px] pl-[80px]">
            <span className="mt-px h-[13px] w-[13px] border border-[#666] bg-white" />
            <span className="pl-[13px] text-[13px] leading-[18px] tracking-[-0.29px] text-[#999]">Save settings to project</span>
          </div>
          <div className="flex h-[50px] gap-[13px] border-b border-[#dcdcdc] pt-[10px] pl-[54px]">
            <div className="h-[30px] w-[100px] rounded-[3px] border border-[#4a9db1] bg-linear-to-b from-[#79c3d3] to-[#64b9cd] pl-px text-center text-[13px] leading-[26px] tracking-[-0.1px] text-white shadow-[0_1px_1px_rgba(0,0,0,0.12)]">
              Export
            </div>
            <div className="h-[30px] w-[100px] rounded-[3px] border border-[#ccc] bg-white pl-px text-center text-[13px] leading-[26px] tracking-[-0.1px] text-[#555] shadow-[0_1px_1px_rgba(0,0,0,0.05)]">
              Cancel
            </div>
          </div>
        </aside>
      </div>
    </div>
  );
}
